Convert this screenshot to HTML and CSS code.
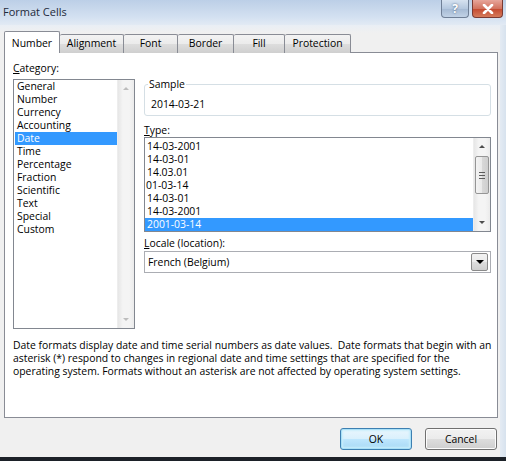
FILE: index.html
```html
<!DOCTYPE html>
<html>
<head>
<meta charset="utf-8">
<title>Format Cells</title>
<link rel="stylesheet" href="styles.css">
</head>
<body>
<div class="window">
  <div class="titlebar">
    <span class="title">Format Cells</span>
    <div class="caption-btns">
      <div class="cbtn help">?</div>
      <div class="cbtn close">
        <svg width="14" height="10" viewBox="0 0 14 10"><path d="M3 1 L11 9 M11 1 L3 9" stroke="#fff" stroke-width="2.6" stroke-linecap="round"/></svg>
      </div>
    </div>
  </div>
  <div class="frame">
    <div class="main">
      <div class="tabs">
        <div class="tab active">Number</div>
        <div class="tab">Alignment</div>
        <div class="tab">Font</div>
        <div class="tab">Border</div>
        <div class="tab">Fill</div>
        <div class="tab">Protection</div>
      </div>
      <div class="panel">
        <div class="cols">
          <div class="left">
            <div class="label"><u>C</u>ategory:</div>
            <div class="listbox cat">
              <ul class="items">
                <li>General</li>
                <li>Number</li>
                <li>Currency</li>
                <li>Accounting</li>
                <li class="sel">Date</li>
                <li>Time</li>
                <li>Percentage</li>
                <li>Fraction</li>
                <li>Scientific</li>
                <li>Text</li>
                <li>Special</li>
                <li>Custom</li>
              </ul>
              <div class="vscroll disabled">
                <div class="arrow up"></div>
                <div class="track"></div>
                <div class="arrow down"></div>
              </div>
            </div>
          </div>
          <div class="right">
            <fieldset class="sample">
              <legend>Sample</legend>
              <div class="sample-val">2014-03-21</div>
            </fieldset>
            <div class="label type-label"><u>T</u>ype:</div>
            <div class="listbox type">
              <ul class="items">
                <li>14-03-2001</li>
                <li>14-03-01</li>
                <li>14.03.01</li>
                <li class="tight">01-03-14</li>
                <li>14-03-01</li>
                <li>14-03-2001</li>
                <li class="sel">2001-03-14</li>
              </ul>
              <div class="vscroll">
                <div class="arrow up"></div>
                <div class="track">
                  <div class="thumb"><span class="grip"></span></div>
                </div>
                <div class="arrow down"></div>
              </div>
            </div>
            <div class="label locale-label"><u>L</u>ocale (location):</div>
            <div class="select">
              <span class="select-val">French (Belgium)</span>
              <div class="drop"><span class="tri"></span></div>
            </div>
          </div>
        </div>
        <p class="desc">Date formats display date and time serial numbers as date values.&nbsp; Date formats that begin with an asterisk (*) respond to changes in regional date and time settings that are specified for the operating system. Formats without an asterisk are not affected by operating system settings.</p>
      </div>
      <div class="footer">
        <button class="btn ok">OK</button>
        <button class="btn">Cancel</button>
      </div>
    </div>
    <div class="edge"></div>
  </div>
  <div class="taskbar"></div>
</div>
</body>
</html>
```
FILE: styles.css
```css
* { box-sizing: border-box; }
html, body { margin: 0; padding: 0; }
body {
  width: 506px;
  height: 461px;
  overflow: hidden;
  background: #f0f0f0;
  font-family: "Open Sans", "Noto Sans", sans-serif;
  font-size: 10.4px;
  color: #000;
}
.window {
  width: 506px;
  height: 461px;
  display: flex;
  flex-direction: column;
}
.titlebar {
  height: 25px;
  flex: none;
  display: flex;
  align-items: flex-start;
  justify-content: space-between;
  background: linear-gradient(#bccfe7, #d4e1f1 70%, #e2eaf4);
}
.title {
  padding: 5px 0 0 3px;
  font-size: 11px;
  line-height: 14px;
  color: #1e2a3a;
}
.caption-btns {
  display: flex;
  gap: 3px;
  padding-right: 3px;
}
.cbtn {
  height: 18px;
  border: 1px solid #6f7f96;
  border-top: none;
  border-radius: 0 0 4px 4px;
  display: flex;
  align-items: center;
  justify-content: center;
}
.help {
  width: 28px;
  background: linear-gradient(#d6e2f0, #b5c8df 50%, #a4b9d3 51%, #c1d2e6);
  color: #fff;
  font-weight: bold;
  font-size: 12px;
  text-shadow: 0 0 2px #3d5775;
}
.close {
  width: 31px;
  border-color: #7b3a32;
  background: linear-gradient(#e7a59a, #d2735f 50%, #c4482f 51%, #d57b5b);
}
.frame {
  flex: 1;
  display: flex;
  background: linear-gradient(#e9eef5, #f0f0f0 8px);
}
.main {
  width: 500px;
  display: flex;
  flex-direction: column;
}
.edge {
  flex: 1;
  background: linear-gradient(90deg, #e4ebf3, #d7e2ee);
}
.tabs {
  display: flex;
  align-items: flex-end;
  margin: 6px 0 0 4px;
  height: 22px;
  position: relative;
  z-index: 1;
  margin-bottom: -1px;
}
.tab {
  height: 19px;
  line-height: 17px;
  text-align: center;
  border: 1px solid #898c95;
  border-bottom: none;
  border-left: none;
  background: linear-gradient(#f3f3f3, #ebebeb 50%, #dddddd 51%, #cfcfcf);
  border-radius: 2px 2px 0 0;
}
.tab:nth-child(2) { width: 64px; }
.tab:nth-child(3) { width: 54px; }
.tab:nth-child(4) { width: 56px; }
.tab:nth-child(5) { width: 51px; }
.tab:nth-child(6) { width: 66px; }
.tab.active {
  width: 56px;
  height: 22px;
  line-height: 22px;
  border-left: 1px solid #898c95;
  background: #fff;
}
.panel {
  margin-left: 4px;
  width: 494px;
  height: 366px;
  border: 1px solid #898c95;
  background: #fff;
  padding: 9px 6px 0 8px;
}
.cols {
  display: flex;
  gap: 9px;
}
.left { width: 122px; }
.right { width: 347px; padding-top: 16px; }
.label {
  line-height: 13px;
  height: 13px;
}
.listbox {
  display: flex;
  border: 1px solid #828790;
  background: #fff;
}
.listbox.cat {
  margin-top: 4px;
  height: 250px;
}
.items {
  list-style: none;
  margin: 0;
  padding: 0;
  flex: 1;
}
.items li {
  height: 13px;
  line-height: 13px;
  padding-left: 2px;
  white-space: nowrap;
}
.items li.sel {
  background: #3399ff;
  color: #fff;
}
.cat .items li { padding-left: 3px; }
.cat .items li.sel { margin-left: 1px; padding-left: 2px; }
.type .items { padding-top: 2px; }
.type .items li.tight { padding-left: 1px; }
.vscroll {
  width: 17px;
  display: flex;
  flex-direction: column;
  background: linear-gradient(90deg, #e6e6e6, #f4f4f4 30%, #f4f4f4 70%, #ebebeb);
  border-left: 1px solid #ededed;
}
.vscroll .track { flex: 1; position: relative; }
.arrow {
  height: 17px;
  display: flex;
  align-items: center;
  justify-content: center;
}
.arrow::before {
  content: "";
  border-left: 3px solid transparent;
  border-right: 3px solid transparent;
}
.arrow.up::before { border-bottom: 3px solid #4d4d4d; }
.arrow.down::before { border-top: 3px solid #4d4d4d; }
.vscroll.disabled .arrow.up::before { border-bottom-color: #bdbdbd; }
.vscroll.disabled .arrow.down::before { border-top-color: #bdbdbd; }
.thumb {
  position: absolute;
  left: 1px;
  right: 1px;
  top: 1px;
  height: 38px;
  border: 1px solid #959595;
  border-radius: 2px;
  background: linear-gradient(90deg, #f3f3f3, #e9e9e9 50%, #d8d8d8 51%, #cecece);
  display: flex;
  align-items: center;
  justify-content: center;
}
.grip {
  width: 6px;
  height: 7px;
  background: repeating-linear-gradient(#5b5b5b 0 1px, transparent 1px 3px);
}
.sample {
  margin: 0;
  height: 38px;
  border: 1px solid #d5dfe5;
  border-radius: 3px;
  padding: 7px 0 0 5px;
}
.sample legend {
  padding: 0 1px;
  margin-left: -2px;
  line-height: 13px;
}
.sample-val { line-height: 13px; padding-left: 1px; }
.type-label { margin-top: 8px; }
.listbox.type {
  height: 95px;
  width: 347px;
}
.locale-label { margin-top: 5px; }
.select {
  margin-top: 1px;
  height: 22px;
  width: 347px;
  border: 1px solid #abadb3;
  display: flex;
  align-items: center;
  justify-content: space-between;
  padding: 0 2px 0 3px;
}
.drop {
  width: 17px;
  height: 18px;
  border: 1px solid #8a8a8a;
  border-radius: 2px;
  background: linear-gradient(#f2f2f2, #ebebeb 50%, #dddddd 51%, #cfcfcf);
  display: flex;
  align-items: center;
  justify-content: center;
}
.tri {
  border-left: 4px solid transparent;
  border-right: 4px solid transparent;
  border-top: 4px solid #000;
}
.desc {
  margin: 10px 0 0 0;
  line-height: 13px;
  width: 480px;
}
.footer {
  display: flex;
  justify-content: flex-end;
  gap: 13px;
  padding: 10px 3px 0 0;
}
.btn {
  width: 72px;
  height: 22px;
  font: inherit;
  color: #000;
  border: 1px solid #707070;
  border-radius: 3px;
  background: linear-gradient(#f2f2f2, #ebebeb 50%, #dddddd 51%, #cfcfcf);
  box-shadow: inset 0 0 0 1px #fcfcfc;
  padding: 0;
}
.btn.ok {
  border-color: #3c7fb1;
  box-shadow: inset 0 0 0 1px #a9e0f7, inset 0 0 2px 2px #cbeefb;
  background: linear-gradient(#eaf6fd, #d9f0fc 50%, #bee6fd 51%, #a7d9f5);
}
.taskbar {
  height: 4px;
  flex: none;
  background: #1c2128;
}
```
